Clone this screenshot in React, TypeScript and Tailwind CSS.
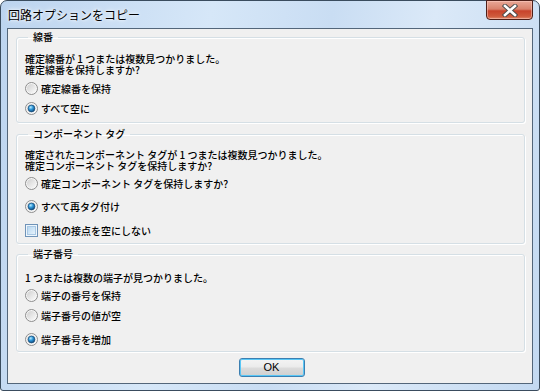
import React from 'react';

const jp = "font-['Noto_Sans_CJK_JP',sans-serif]";

function Radio({ checked = false }: { checked?: boolean }) {
  return (
    <svg width="13" height="13" viewBox="0 0 13 13" className="shrink-0">
      <defs>
        <linearGradient id="radio-bg" x1="0" y1="0" x2="1" y2="1">
          <stop offset="0" stopColor="#cfcfcf" />
          <stop offset="1" stopColor="#fbfbfb" />
        </linearGradient>
        <radialGradient id="radio-dot" cx="0.38" cy="0.32" r="0.75">
          <stop offset="0" stopColor="#b8ecff" />
          <stop offset="0.45" stopColor="#2c95d8" />
          <stop offset="1" stopColor="#0d3f6e" />
        </radialGradient>
      </defs>
      <circle cx="6.5" cy="6.5" r="6" fill="#f6f6f6" stroke="#8d8d8d" />
      <circle cx="6.5" cy="6.5" r="4.6" fill="url(#radio-bg)" />
      {checked && <circle cx="6.5" cy="6.5" r="3.4" fill="url(#radio-dot)" stroke="#174c7a" strokeWidth="0.7" />}
    </svg>
  );
}

function Option({ checked, label, className = '' }: { checked?: boolean; label: string; className?: string }) {
  return (
    <div className={`flex h-[13px] items-center gap-[3px] ${className}`}>
      <Radio checked={checked} />
      <span className="leading-[13px]">{label}</span>
    </div>
  );
}

function Group({ title, className = '', children }: { title: string; className?: string; children: React.ReactNode }) {
  return (
    <fieldset
      className={`rounded-[3px] border border-[#d5dfe5] pl-[8px] shadow-[inset_1px_1px_0_#ffffff,1px_1px_0_#ffffff] ${className}`}
    >
      <legend className="ml-[3px] px-[5px] leading-[12px]">{title}</legend>
      {children}
    </fieldset>
  );
}

export default function App() {
  return (
    <div className={`${jp} text-[10px] font-medium text-black`}>
      <div className="flex h-[391px] w-[540px] flex-col rounded-t-[7px] rounded-b-[3px] border border-[#3a4c5e] bg-[linear-gradient(100deg,#bcd4ef_0%,#d6e7f8_35%,#c9ddf3_55%,#dbe9f8_72%,#c3d9f1_100%)] px-[6px] pb-[6px]">
        {/* title bar */}
        <div className="flex h-[27px] shrink-0 items-start justify-between">
          <span className="mt-[6px] pl-[1px] text-[12px] font-normal leading-[16px] [text-shadow:0_0_6px_#ffffff,0_0_3px_#ffffff]">
            回路オプションをコピー
          </span>
          <button
            type="button"
            className="-mt-[1px] flex h-[20px] w-[47px] items-center justify-center rounded-b-[4px] border border-[#4e1f18] bg-[linear-gradient(180deg,#e9a897_0%,#d9826c_45%,#c8432b_55%,#cf5a3c_85%,#e08a6c_100%)] shadow-[inset_0_0_0_1px_rgba(255,210,200,0.5)]"
          >
            <svg width="16" height="13" viewBox="0 0 16 13">
              <path d="M3 2 L13 11 M13 2 L3 11" stroke="#4a4a4a" strokeWidth="4.4" strokeLinecap="square" />
              <path d="M3 2 L13 11 M13 2 L3 11" stroke="#ffffff" strokeWidth="2.6" strokeLinecap="square" />
            </svg>
          </button>
        </div>

        {/* client */}
        <div className="flex flex-1 flex-col border border-[#53667a] bg-[#f0f0f0] pl-[8px] pr-[7px]">
          <Group title="線番" className="mt-[2px] pb-[7px]">
            <div className="pt-[10px] leading-[11px]">
              <p>確定線番が 1 つまたは複数見つかりました。</p>
              <p>確定線番を保持しますか?</p>
            </div>
            <Option label="確定線番を保持" className="mt-[7px]" />
            <Option checked label="すべて空に" className="mt-[7px]" />
          </Group>

          <Group title="コンポーネント タグ" className="mt-[5px] pb-[6px]">
            <div className="pt-[9px] leading-[11px]">
              <p>確定されたコンポーネント タグが 1 つまたは複数見つかりました。</p>
              <p>確定コンポーネント タグを保持しますか?</p>
            </div>
            <Option label="確定コンポーネント タグを保持しますか?" className="mt-[6px]" />
            <Option checked label="すべて再タグ付け" className="mt-[10px]" />
            <div className="mt-[11px] flex h-[13px] items-center gap-[3px]">
              <div className="flex h-[13px] w-[13px] shrink-0 items-center justify-center border border-[#6f93b8] bg-[#eef6fc]">
                <div className="h-[9px] w-[9px] border border-[#a9c8e4] bg-[linear-gradient(135deg,#b9d8f1,#e6f2fb)]" />
              </div>
              <span className="leading-[13px]">単独の接点を空にしない</span>
            </div>
          </Group>

          <Group title="端子番号" className="mt-[4px] pb-[5px]">
            <p className="pt-[12px] leading-[11px]">1 つまたは複数の端子が見つかりました。</p>
            <Option label="端子の番号を保持" className="mt-[6px]" />
            <Option label="端子番号の値が空" className="mt-[7px]" />
            <Option checked label="端子番号を増加" className="mt-[11px]" />
          </Group>

          <div className="mt-[6px] flex justify-center pl-[2px]">
            <button
              type="button"
              className="h-[19px] w-[66px] rounded-[3px] border border-[#3c7fb1] bg-[linear-gradient(180deg,#f4f4f4_0%,#ebebeb_48%,#dcdcdc_52%,#cfcfcf_100%)] font-['Liberation_Sans',sans-serif] text-[11px] font-normal leading-[15px] shadow-[inset_0_0_0_1px_#59c7f6]"
            >
              OK
            </button>
          </div>
        </div>
      </div>
    </div>
  );
}
